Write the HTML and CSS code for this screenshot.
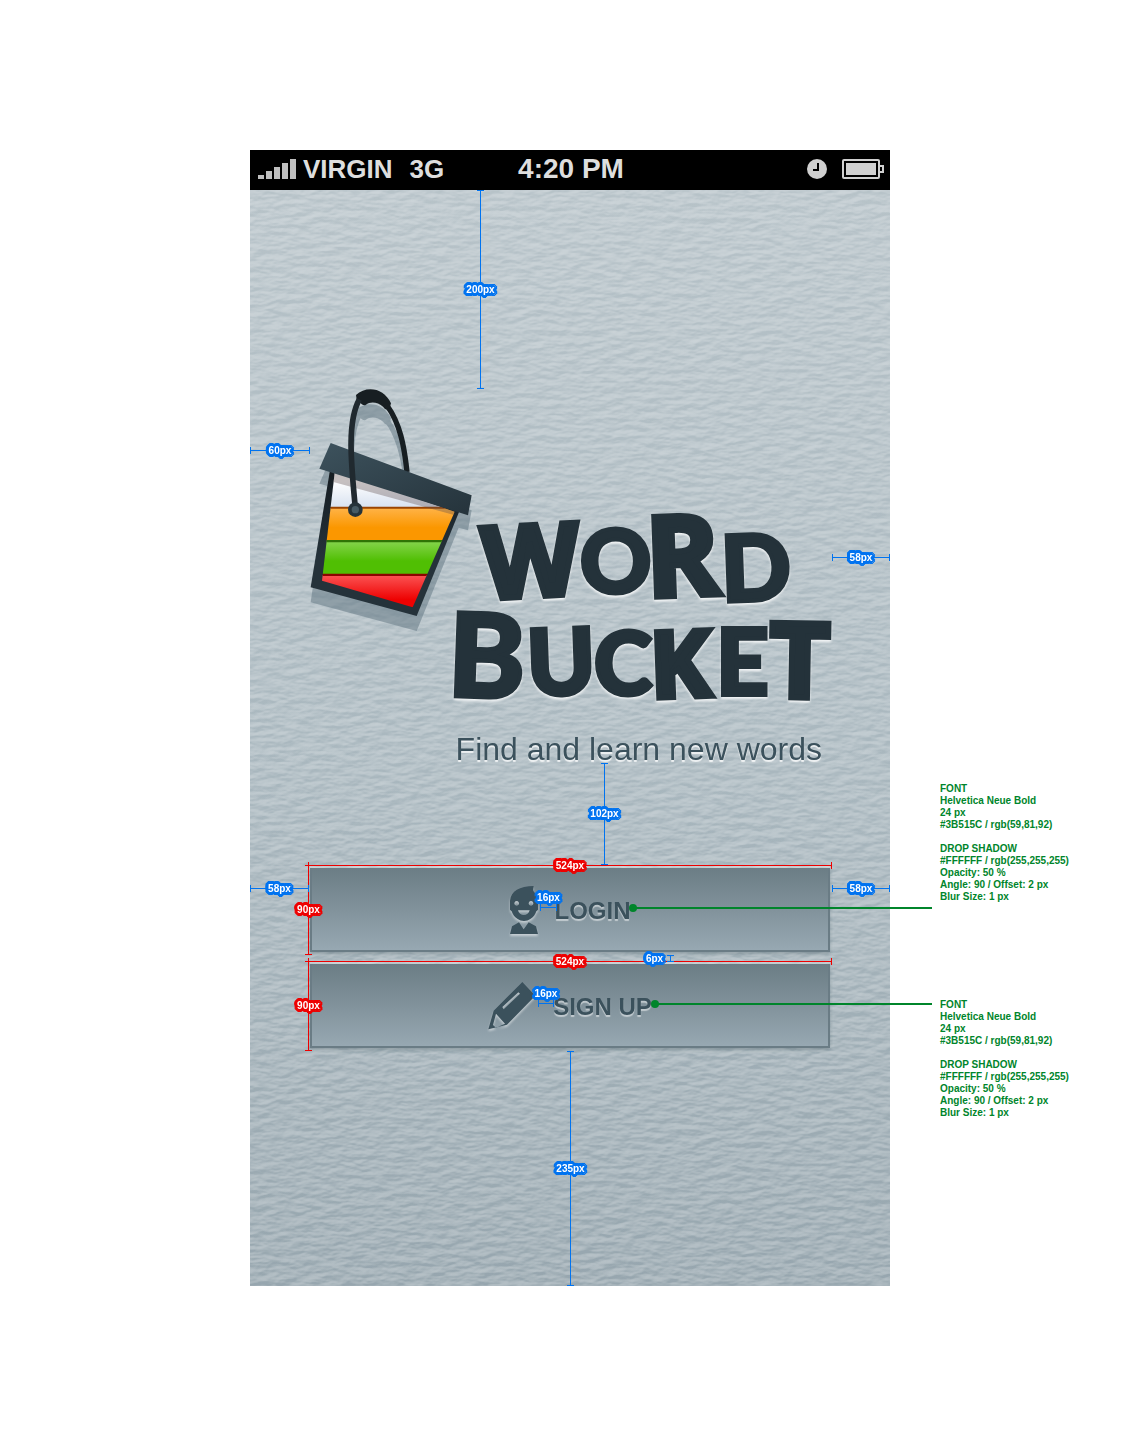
FILE: index.html
```html
<!DOCTYPE html>
<html lang="en">
<head>
<meta charset="utf-8">
<meta name="viewport" content="width=device-width, initial-scale=1">
<title>Word Bucket – start screen spec</title>
<link rel="stylesheet" href="styles.css">
</head>
<body>
<main class="board">
  <section class="phone">
    <header class="status">
      <div class="status-left">
        <svg class="signal" width="38" height="20" viewBox="0 0 38 20" aria-hidden="true"><path fill="#bfbfbf" d="M0 16h6v4H0zM8 12h6v8H8zM16 8h6v12h-6zM24 4h6v16h-6zM32 0h6v20h-6z"/></svg>
        <span>VIRGIN</span>
        <span class="network">3G</span>
      </div>
      <time class="clock">4:20 PM</time>
      <div class="status-right">
        <svg width="20" height="20" viewBox="0 0 20 20" aria-hidden="true"><circle cx="10" cy="10" r="10" fill="#d0d0d0"/><path d="M11 4v7H6" fill="none" stroke="#000" stroke-width="2"/></svg>
        <svg width="42" height="20" viewBox="0 0 42 20" aria-hidden="true"><rect x="1" y="1" width="36" height="18" rx="1" fill="none" stroke="#d0d0d0" stroke-width="2"/><rect x="4" y="4" width="30" height="12" fill="#d0d0d0"/><path d="M38 7h3v6h-3" fill="none" stroke="#d0d0d0" stroke-width="2"/></svg>
      </div>
    </header>

    <div class="screen">
      <svg class="leather" aria-hidden="true">
        <filter id="grain" x="0" y="0" width="100%" height="100%" color-interpolation-filters="sRGB">
          <feTurbulence type="fractalNoise" baseFrequency="0.06 0.16" numOctaves="3" seed="8"/>
          <feDiffuseLighting surfaceScale="3" lighting-color="#fff"><feDistantLight azimuth="250" elevation="30"/></feDiffuseLighting>
        </filter>
        <rect width="100%" height="100%" filter="url(#grain)"/>
      </svg>

      <svg class="logo" viewBox="310 388 520 320" role="img" aria-label="Word Bucket">
        <defs>
          <linearGradient id="lid" x1="0" y1="0" x2="1" y2="1"><stop offset="0" stop-color="#3d525d"/><stop offset="1" stop-color="#25333b"/></linearGradient>
          <linearGradient id="white" x1="0" y1="0" x2="0" y2="1"><stop offset=".3" stop-color="#fff"/><stop offset="1" stop-color="#d8e2f0"/></linearGradient>
          <linearGradient id="orange" x1="0" y1="0" x2="0" y2="1"><stop offset="0" stop-color="#ffb347"/><stop offset=".6" stop-color="#fb9700"/></linearGradient>
          <linearGradient id="green" x1="0" y1="0" x2="0" y2="1"><stop offset="0" stop-color="#85d44c"/><stop offset=".6" stop-color="#50bf03"/></linearGradient>
          <linearGradient id="red" x1="0" y1="0" x2="0" y2="1"><stop offset="0" stop-color="#fb5454"/><stop offset=".7" stop-color="#ee0202"/></linearGradient>
          <linearGradient id="body" x1="0" y1="0" x2="0" y2="1"><stop offset="0" stop-color="#151c21"/><stop offset=".6" stop-color="#25323a"/></linearGradient>
          <clipPath id="inside"><path d="M135 300L96 632L368 712L494 425Z"/></clipPath>
          <g id="handle">
            <path d="M351 306C343 230 330 160 292 108" fill="none" stroke-width="16"/>
            <path d="M198 75C228 46 282 52 303 100L299 114C292 121 284 119 280 111C262 94 240 94 228 104C222 108 216 104 211 98L201 96Z" stroke="none"/>
          </g>
          <path id="strap" d="M196 415C186 300 168 160 208 88" fill="none" stroke-width="17"/>
          <path id="lidshape" d="M122 219L545 376L534 436L88 296Z"/>
          <path id="bodyshape" d="M120 300L62 652L380 738L508 424Z"/>
        </defs>
        <svg x="290" y="370" width="200" height="270" viewBox="0 0 600 810">
          <g transform="translate(0 45)" opacity=".5" fill="#5f7480" stroke="#5f7480">
            <use href="#handle"/><use href="#strap"/>
            <path stroke="none" d="M122 219L545 376L534 436L506 428L380 738L62 652L112 303L88 296Z"/>
          </g>
          <use href="#bodyshape" fill="url(#body)"/>
          <g clip-path="url(#inside)">
            <path fill="url(#white)" d="M90 300H500V412H90Z"/>
            <path fill="url(#orange)" d="M90 414H500V512H90Z"/>
            <path fill="url(#green)" d="M90 514H500V612H90Z"/>
            <path fill="url(#red)" d="M90 615H500V720H90Z"/>
            <path fill="#9b4400" d="M90 410H500V416H90Z"/>
            <path fill="#2f7405" d="M90 510H500V517H90Z"/>
            <path fill="#8c0500" d="M90 611H500V618H90Z"/>
            <path fill="#5b4a4a" opacity=".35" d="M100 290L520 410L510 440L100 328Z"/>
          </g>
          <use href="#handle" fill="#171e22" stroke="#171e22"/>
          <use href="#lidshape" fill="url(#lid)"/>
          <use href="#strap" stroke="#20292f"/>
          <circle cx="196" cy="419" r="22" fill="#25333b"/><circle cx="196" cy="419" r="11" fill="#465a64"/>
        </svg>
        <g class="wordmark">
          <text><tspan class="sharp s-w" x="484" y="599" rotate="-3">W</tspan><tspan class="s-o" x="580" y="593">O</tspan><tspan class="sharp s-r" x="647" y="597" rotate="-2">R</tspan><tspan class="s-d" x="722" y="602" rotate="-2">D</tspan></text>
          <text><tspan class="s-b" x="447" y="696" rotate="2">B</tspan><tspan class="s-u" x="528" y="696" rotate="-2">U</tspan><tspan class="s-c" x="594" y="695">C</tspan><tspan class="sharp s-k" x="651" y="698" rotate="-2">K</tspan><tspan class="s-e" x="716" y="695">E</tspan><tspan class="sharp s-t" x="769" y="697" rotate="1">T</tspan></text>
        </g>
      </svg>
      <p class="tagline">Find and learn new words</p>

      <div class="actions">
        <div class="action">
          <button class="btn" type="button">
            <svg width="28" height="48" viewBox="90 48 84 144" aria-hidden="true"><path fill-rule="evenodd" d="M161 48C159 56 158 62 163 67C171 76 173 86 172 97L174 100V119L169 124C166 134 160 142 151 147C141 155 123 155 113 147C104 142 98 134 95 124L90 119V92C93 62 118 49 161 48ZM110 93a7 7 0 1 0 .1 0ZM153 93a7 7 0 1 0 .1 0ZM114 121C118 140 145 140 149 121Z"/><path d="M90 192L96 169L117 157L131 178L146 157L168 169L174 192Z"/></svg>
            <span>LOGIN</span>
          </button>
          <span class="dim h red full"><span class="label">524px</span></span>
          <span class="dim v red side"><span class="label">90px</span></span>
          <span class="dim h blue gap gap-login"><span class="label up">16px</span></span>
          <span class="leader leader-login"></span>
        </div>
        <div class="action">
          <button class="btn" type="button">
            <svg width="48" height="48" viewBox="24 335 144 144" aria-hidden="true"><path fill-rule="evenodd" d="M127 335L166 376L81 463L25 477L41 421ZM115 366L67 410L71 417L120 370ZM48 430L39 464L48 472L75 460Z"/></svg>
            <span>SIGN UP</span>
          </button>
          <span class="dim h red full"><span class="label">524px</span></span>
          <span class="dim v red side"><span class="label">90px</span></span>
          <span class="dim v blue between"><span class="label before">6px</span></span>
          <span class="dim h blue gap gap-signup"><span class="label up">16px</span></span>
          <span class="leader leader-signup"></span>
        </div>
      </div>

      <span class="dim v blue d-top"><span class="label">200px</span></span>
      <span class="dim h blue d-logo-left"><span class="label">60px</span></span>
      <span class="dim h blue d-logo-right"><span class="label">58px</span></span>
      <span class="dim v blue d-tagline"><span class="label">102px</span></span>
      <span class="dim h blue d-btn-left"><span class="label">58px</span></span>
      <span class="dim h blue d-btn-right"><span class="label">58px</span></span>
      <span class="dim v blue d-bottom"><span class="label">235px</span></span>
    </div>
  </section>

  <aside class="notes">
    <div class="note">
      <p>FONT<br>Helvetica Neue Bold<br>24 px<br>#3B515C / rgb(59,81,92)</p>
      <p>DROP SHADOW<br>#FFFFFF / rgb(255,255,255)<br>Opacity: 50 %<br>Angle: 90 / Offset: 2 px<br>Blur Size: 1 px</p>
    </div>
    <div class="note">
      <p>FONT<br>Helvetica Neue Bold<br>24 px<br>#3B515C / rgb(59,81,92)</p>
      <p>DROP SHADOW<br>#FFFFFF / rgb(255,255,255)<br>Opacity: 50 %<br>Angle: 90 / Offset: 2 px<br>Blur Size: 1 px</p>
    </div>
  </aside>
</main>
</body>
</html>
```
FILE: styles.css
```css
* { box-sizing: border-box; }

body {
  margin: 0;
  background: #fff;
  font-family: "Liberation Sans", Arial, sans-serif;
}

p { margin: 0; }

.board {
  display: grid;
  grid-template-columns: minmax(0, 1fr) minmax(0, 640px) minmax(0, 1fr);
  padding: 150px 0;
}

.phone { grid-column: 2; }

/* Status bar */
.status {
  display: grid;
  grid-template-columns: 1fr auto 1fr;
  align-items: center;
  height: 40px;
  padding: 0 6px 2px 8px;
  background: #000;
  color: #dedede;
  font-size: 26px;
  font-weight: bold;
  line-height: 38px;
}

.status-left,
.status-right {
  display: flex;
  align-items: center;
}

.signal { margin-right: 7px; }
.network { margin-left: 17px; }
.clock { font-size: 28px; }

.status-right {
  justify-content: flex-end;
  gap: 15px;
}

/* App screen */
.screen {
  position: relative;
  isolation: isolate;
  padding: 198px 60px 238px;
  background: linear-gradient(#c2ccd1, #b7c3c9 50%, #a7b4bb);
}

.leather {
  position: absolute;
  inset: 0;
  z-index: -1;
  width: 100%;
  height: 100%;
  mix-blend-mode: overlay;
  opacity: 0.18;
}

.logo {
  display: block;
  width: 100%;
  overflow: visible;
}

.wordmark {
  font-family: Lato, sans-serif;
  font-weight: 900;
  fill: #24323a;
  stroke: #24323a;
  stroke-width: 4px;
  filter: drop-shadow(0 2px 1px rgba(255, 255, 255, 0.8));
}

.sharp {
  font-family: "Open Sans", sans-serif;
  font-weight: 700;
  stroke-width: 6px;
}

.s-w { font-size: 100px; }
.s-o { font-size: 88px; }
.s-r { font-size: 112px; }
.s-d { font-size: 92px; }
.s-b { font-size: 116px; }
.s-u { font-size: 92px; }
.s-c { font-size: 88px; }
.s-k { font-size: 92px; }
.s-e { font-size: 92px; }
.s-t { font-size: 104px; }

.tagline {
  margin-top: 21px;
  padding-right: 8px;
  color: #3b515c;
  font-size: 32px;
  line-height: 40px;
  text-align: right;
  text-shadow: 0 2px 1px rgba(255, 255, 255, 0.8);
}

.actions {
  display: grid;
  gap: 12px;
  margin-top: 99px;
}

.action { position: relative; }

.btn {
  display: flex;
  align-items: center;
  justify-content: center;
  gap: 17px;
  width: 100%;
  height: 84px;
  padding: 2px 0 0;
  border: 2px solid #6a7c85;
  border-top: 0;
  background: linear-gradient(#6b7d85, #81929b 50%, #97a8b2);
  box-shadow: 0 -2px 0 rgba(255, 255, 255, 0.25), 0 2px 3px rgba(60, 80, 90, 0.3);
  color: #3b515c;
  font: bold 24px/28px "Liberation Sans", Arial, sans-serif;
  text-shadow: 0 2px 1px rgba(255, 255, 255, 0.5);
}

.btn span { padding-top: 2px; }

.btn svg {
  fill: #3b515c;
  filter: drop-shadow(0 2px 1px rgba(255, 255, 255, 0.5));
}

/* Dimension marks laid over the screen */
.dim {
  position: absolute;
  display: flex;
  align-items: center;
  justify-content: center;
}

.blue { --ink: #0073f0; }
.red { --ink: #ee0000; }

.h {
  height: 7px;
  border: solid var(--ink);
  border-width: 0 1px;
  background: linear-gradient(var(--ink), var(--ink)) center / 100% 1px no-repeat;
}

.v {
  width: 7px;
  border: solid var(--ink);
  border-width: 1px 0;
  background: linear-gradient(var(--ink), var(--ink)) center / 1px 100% no-repeat;
}

.label {
  flex: none;
  color: #fff;
  font-size: 10px;
  font-weight: bold;
  line-height: 12px;
  text-shadow:
    3px 0 var(--ink), -3px 0 var(--ink), 0 3px var(--ink), 0 -3px var(--ink),
    3px 1px var(--ink), -3px 1px var(--ink), 3px -1px var(--ink), -3px -1px var(--ink),
    1px 3px var(--ink), -1px 3px var(--ink), 1px -3px var(--ink), -1px -3px var(--ink),
    2px 2px var(--ink), -2px 2px var(--ink), 2px -2px var(--ink), -2px -2px var(--ink),
    1px 1px var(--ink), -1px 1px var(--ink), 1px -1px var(--ink), -1px -1px var(--ink);
}

.up { margin-top: -20px; }
.before { margin-left: -32px; }

.full { top: -6px; left: -2px; right: -2px; }
.side { top: -3px; left: -5px; height: 90px; }
.gap { top: 36px; width: 17px; }
.gap-login { left: calc(50% - 30px); }
.gap-signup { left: calc(50% - 32px); width: 16px; }
.between { top: -9px; left: calc(50% + 97px); height: 7px; }

.d-top { top: 0; left: 227px; height: 199px; }
.d-logo-left { top: 257px; left: 0; width: 60px; }
.d-logo-right { top: 364px; right: 0; width: 58px; }
.d-tagline { top: 573px; left: calc(50% + 31px); height: 102px; }
.d-btn-left { top: 695px; left: 0; width: 59px; }
.d-btn-right { top: 695px; right: 0; width: 58px; }
.d-bottom { bottom: 0; left: calc(50% - 3px); height: 235px; }

/* Leader lines from button text to the notes */
.leader {
  position: absolute;
  top: 39px;
  right: -102px;
  height: 2px;
  background: #00852b;
}

.leader::before {
  content: "";
  position: absolute;
  top: -3px;
  left: -4px;
  width: 8px;
  height: 8px;
  border-radius: 50%;
  background: #00852b;
}

.leader-login { left: calc(50% + 63px); }
.leader-signup { left: calc(50% + 85px); }

/* Specification notes */
.notes {
  display: grid;
  align-content: start;
  gap: 96px;
  padding: 633px 0 0 50px;
}

.note {
  display: grid;
  gap: 12px;
  color: #00852b;
  font-size: 10px;
  font-weight: bold;
  line-height: 12px;
  white-space: nowrap;
}
```
